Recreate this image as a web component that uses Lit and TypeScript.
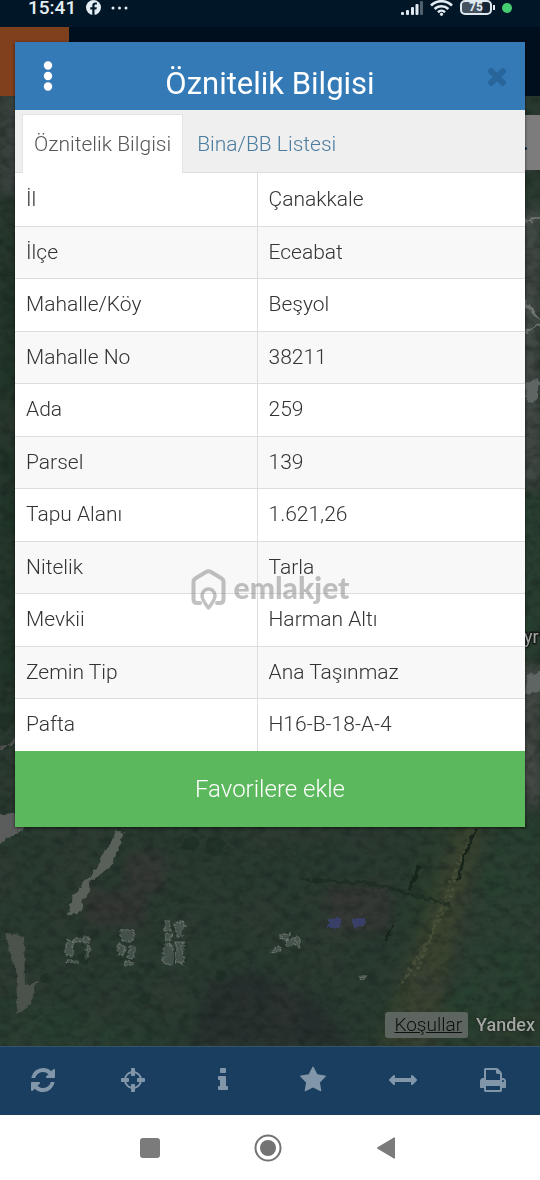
import { LitElement, html, css, svg } from "lit";
import { customElement, property } from "lit/decorators.js";

interface Attribute {
  label: string;
  value: string;
}

const ATTRIBUTES: Attribute[] = [
  { label: "İl", value: "Çanakkale" },
  { label: "İlçe", value: "Eceabat" },
  { label: "Mahalle/Köy", value: "Beşyol" },
  { label: "Mahalle No", value: "38211" },
  { label: "Ada", value: "259" },
  { label: "Parsel", value: "139" },
  { label: "Tapu Alanı", value: "1.621,26" },
  { label: "Nitelik", value: "Tarla" },
  { label: "Mevkii", value: "Harman Altı" },
  { label: "Zemin Tip", value: "Ana Taşınmaz" },
  { label: "Pafta", value: "H16-B-18-A-4" },
];

const GLYPHS = {
  refresh:
    "M1639 1056q0 5-1 7-64 268-268 434.5t-478 166.5q-146 0-282.5-55t-243.5-157l-129 129q-19 19-45 19t-45-19-19-45v-448q0-26 19-45t45-19h448q26 0 45 19t19 45-19 45l-137 137q71 66 161 102t187 36q134 0 250-65t186-179q11-17 53-117 8-23 30-23h192q13 0 22.5 9.5t9.5 22.5zm25-800v448q0 26-19 45t-45 19h-448q-26 0-45-19t-19-45 19-45l138-138q-148-137-349-137-134 0-250 65t-186 179q-11 17-53 117-8 23-30 23h-199q-13 0-22.5-9.5t-9.5-22.5v-7q65-268 270-434.5t480-166.5q146 0 284 55.5t245 156.5l130-129q19-19 45-19t45 19 19 45z",
  locate:
    "M1325 1024h-109q-26 0-45-19t-19-45v-128q0-26 19-45t45-19h109q-32-108-112.5-188.5t-188.5-112.5v109q0 26-19 45t-45 19h-128q-26 0-45-19t-19-45v-109q-108 32-188.5 112.5t-112.5 188.5h109q26 0 45 19t19 45v128q0 26-19 45t-45 19h-109q32 108 112.5 188.5t188.5 112.5v-109q0-26 19-45t45-19h128q26 0 45 19t19 45v109q108-32 188.5-112.5t112.5-188.5zm339-192v128q0 26-19 45t-45 19h-143q-37 161-154.5 278.5t-278.5 154.5v143q0 26-19 45t-45 19h-128q-26 0-45-19t-19-45v-143q-161-37-278.5-154.5t-154.5-278.5h-143q-26 0-45-19t-19-45v-128q0-26 19-45t45-19h143q37-161 154.5-278.5t278.5-154.5v-143q0-26 19-45t45-19h128q26 0 45 19t19 45v143q161 37 278.5 154.5t154.5 278.5h143q26 0 45 19t19 45z",
  info: "M1216 1344v128q0 26-19 45t-45 19h-512q-26 0-45-19t-19-45v-128q0-26 19-45t45-19h64v-384h-64q-26 0-45-19t-19-45v-128q0-26 19-45t45-19h384q26 0 45 19t19 45v576h64q26 0 45 19t19 45zm-128-1152v192q0 26-19 45t-45 19h-256q-26 0-45-19t-19-45v-192q0-26 19-45t45-19h256q26 0 45 19t19 45z",
  star: "M1728 647q0 22-26 48l-363 354 86 500q1 7 1 20 0 21-10.5 35.5t-30.5 14.5q-19 0-40-12l-449-236-449 236q-22 12-40 12-21 0-31.5-14.5t-10.5-35.5q0-6 2-20l86-500-364-354q-25-27-25-48 0-37 56-46l502-73 225-455q19-41 49-41t49 41l225 455 502 73q56 9 56 46z",
  measure:
    "M1792 896q0 26-19 45l-256 256q-19 19-45 19t-45-19-19-45v-128h-1024v128q0 26-19 45t-45 19-45-19l-256-256q-19-19-19-45t19-45l256-256q19-19 45-19t45 19 19 45v128h1024v-128q0-26 19-45t45-19 45 19l256 256q19 19 19 45z",
  print:
    "M448 1536h896v-256h-896v256zm0-640h896v-384h-160q-40 0-68-28t-28-68v-160h-640v640zm1152 64q0-26-19-45t-45-19-45 19-19 45 19 45 45 19 45-19 19-45zm128 0v416q0 13-9.5 22.5t-22.5 9.5h-224v160q0 40-28 68t-68 28h-960q-40 0-68-28t-28-68v-160h-224q-13 0-22.5-9.5t-9.5-22.5v-416q0-79 56.5-135.5t135.5-56.5h64v-544q0-40 28-68t68-28h672q40 0 88 20t76 48l152 152q28 28 48 76t20 88v256h64q79 0 135.5 56.5t56.5 135.5z",
  close:
    "M1490 1322q0 40-28 68l-136 136q-28 28-68 28t-68-28l-294-294-294 294q-28 28-68 28t-68-28l-136-136q-28-28-28-68t28-68l294-294-294-294q-28-28-28-68t28-68l136-136q28-28 68-28t68 28l294 294 294-294q28-28 68-28t68 28l136 136q28 28 28 68t-28 68l-294 294 294 294q28 28 28 68z",
};

type GlyphName = keyof typeof GLYPHS;

const TOOLS: { glyph: GlyphName; label: string }[] = [
  { glyph: "refresh", label: "Yenile" },
  { glyph: "locate", label: "Konum" },
  { glyph: "info", label: "Bilgi" },
  { glyph: "star", label: "Favoriler" },
  { glyph: "measure", label: "Ölç" },
  { glyph: "print", label: "Yazdır" },
];

@customElement("glyph-icon")
export class GlyphIcon extends LitElement {
  static styles = css`
    :host {
      display: block;
      width: 28px;
      height: 28px;
    }
    .glyph {
      display: block;
      width: 100%;
      height: 100%;
      fill: currentColor;
    }
  `;

  @property() name: GlyphName = "info";

  render() {
    return html`<svg class="glyph" viewBox="0 0 1792 1792" aria-hidden="true">
      <path d=${GLYPHS[this.name]} />
    </svg>`;
  }
}

@customElement("status-bar")
export class StatusBar extends LitElement {
  static styles = css`
    :host {
      display: flex;
      align-items: flex-start;
      justify-content: space-between;
      height: 27px;
      padding: 0 28px;
      box-sizing: border-box;
      background: #011728;
      color: #e4edf4;
    }
    .left,
    .right {
      display: flex;
      align-items: center;
      height: 15px;
    }
    .left {
      gap: 10px;
    }
    .time {
      font-size: 19px;
      line-height: 15px;
      font-weight: 500;
    }
    .right {
      gap: 7px;
    }
    svg {
      display: block;
      overflow: visible;
    }
    .battery {
      display: flex;
      align-items: center;
    }
    .level {
      display: block;
      width: 32px;
      height: 15px;
      box-sizing: border-box;
      border: 2px solid #dfe8ee;
      border-radius: 5px;
      background: linear-gradient(90deg, #45525f 70%, #142636 70%);
      font-size: 12px;
      line-height: 11px;
      font-weight: 700;
      text-align: center;
    }
    .tip {
      width: 2px;
      height: 5px;
      margin-left: 1px;
      background: #dfe8ee;
    }
    .dot {
      width: 10px;
      height: 10px;
      border-radius: 50%;
      background: #45cd72;
    }
  `;

  render() {
    return html`
      <div class="left">
        <span class="time">15:41</span>
        <svg width="15" height="15" viewBox="0 0 15 15" aria-hidden="true">
          <circle cx="7.500" cy="7.500" r="7.500" fill="#e4edf4" />
          <path
            d="M6.300 15V9.600H4.300V7.200h2V5.700c0-2 1.200-3.200 3.100-3.200h1.500v2.100H9.700c-.8 0-1.200.4-1.200 1.100v1.500h2.300l-.4 2.400H8.500V15z"
            fill="#011728"
          />
        </svg>
        <svg width="17" height="4" viewBox="0 0 17 4" fill="#e4edf4" aria-hidden="true">
          <circle cx="2" cy="2" r="1.500" />
          <circle cx="8.500" cy="2" r="1.500" />
          <circle cx="15" cy="2" r="1.500" />
        </svg>
      </div>
      <div class="right">
        <svg width="22" height="14" viewBox="0 0 22 14" fill="#dfe8ee" aria-hidden="true">
          <rect x="0" y="11" width="3" height="3" rx="1" />
          <rect x="5" y="9" width="3" height="5" rx="1" />
          <rect x="10" y="6" width="3" height="8" rx="1" />
          <rect x="14.500" y="3" width="3" height="11" rx="1" />
          <rect x="19" y="0" width="3" height="14" rx="1" fill="#51606d" />
        </svg>
        <svg width="23" height="16" viewBox="0 0 23 16" fill="none" stroke="#e4edf4" stroke-width="2.600" aria-hidden="true">
          <path d="M1 5.500a15 15 0 0 1 21 0M4.600 9a10 10 0 0 1 13.800 0M8 12.200a5 5 0 0 1 7 0" />
          <circle cx="11.500" cy="14.300" r="1.200" fill="#e4edf4" stroke-width="1" />
        </svg>
        <div class="battery"><span class="level">75</span><span class="tip"></span></div>
        <span class="dot"></span>
      </div>
    `;
  }
}

@customElement("satellite-map")
export class SatelliteMap extends LitElement {
  static styles = css`
    :host {
      display: grid;
      min-height: 0;
      overflow: hidden;
      background: #2b3a31;
    }
    .terrain {
      grid-area: 1 / 1;
      display: block;
      width: 100%;
      height: 100%;
      min-height: 0;
    }
    .terrain filter {
      color-interpolation-filters: sRGB;
    }
    .credits {
      grid-area: 1 / 1;
      z-index: 1;
      align-self: end;
      justify-self: end;
      display: flex;
      align-items: center;
      gap: 8px;
      padding: 0 5px 8px 0;
    }
    .terms {
      padding: 0 6px 0 9px;
      border-radius: 3px;
      background: #5d6560;
      color: #0c100e;
      font-size: 19px;
      line-height: 26px;
      font-weight: 300;
    }
    .brand {
      color: #a2a7a3;
      font-size: 18px;
      line-height: 26px;
      font-weight: 500;
      text-shadow: 0 0 2px #111;
    }
    .chip {
      grid-area: 1 / 1;
      z-index: 1;
      justify-self: end;
      width: 130px;
      height: 55px;
      margin-top: 19px;
      background: #7b7c7b;
      color: #080808;
      font-size: 26px;
      line-height: 52px;
      text-indent: 112px;
    }
    .place {
      fill: #a3a7a4;
      stroke: #161b18;
      stroke-width: 3px;
      paint-order: stroke;
      font-size: 18px;
    }
  `;

  private ruins() {
    const spots = [
      [66, 845, 7, 14], [72, 843, 8, 4], [82, 842, 7, 5], [66, 863, 12, 5], [86, 850, 3, 10],
      [121, 834, 13, 11], [118, 850, 6, 10], [128, 850, 6, 13], [123, 866, 10, 4],
      [164, 825, 7, 10], [176, 825, 7, 16], [165, 838, 6, 7], [164, 848, 8, 20], [176, 846, 7, 22],
      [282, 837, 6, 6], [286, 843, 9, 7], [273, 852, 7, 4], [296, 842, 4, 10], [360, 879, 4, 4],
    ];
    return spots.map(
      ([x, y, w, h]) =>
        svg`<rect x=${x} y=${y} width=${w} height=${h} fill="#7c8480" fill-opacity=".35" stroke="#8d938e" stroke-opacity=".6" stroke-dasharray="4 1" />`
    );
  }

  render() {
    return html`
      <svg class="terrain" viewBox="0 0 540 950" preserveAspectRatio="xMidYMid slice" aria-hidden="true">
        <defs>
          <filter id="grain" x="0" y="0" width="100%" height="100%">
            <feTurbulence type="fractalNoise" baseFrequency=".09 .12" numOctaves="5" seed="21" />
            <feColorMatrix values="0 0 0 0 .07  0 0 0 0 .1  0 0 0 0 .09  2 .8 0 0 -1.200" />
          </filter>
          <filter id="patches" x="0" y="0" width="100%" height="100%">
            <feTurbulence type="fractalNoise" baseFrequency=".02" numOctaves="5" seed="3" />
            <feColorMatrix values="0 0 0 0 .22  0 0 0 0 .24  0 0 0 0 .22  2 0 0 0 -.8" />
          </filter>
          <filter id="rough" x="-20%" y="-20%" width="140%" height="140%">
            <feTurbulence type="fractalNoise" baseFrequency=".12" numOctaves="3" seed="5" />
            <feDisplacementMap in="SourceGraphic" scale="8" xChannelSelector="R" yChannelSelector="G" />
            <feGaussianBlur stdDeviation=".7" />
          </filter>
          <filter id="soft"><feGaussianBlur stdDeviation="6" /></filter>
        </defs>
        <rect width="540" height="950" fill="#293a30" />
        <g filter="url(#soft)">
          <path d="M0 0H30V85L0 110z" fill="#3d4441" />
          <path d="M0 100H30V630H0z" fill="#203428" />
          <path d="M520 110H540V390H520z" fill="#454d49" />
          <path d="M515 400H540V560H515z" fill="#28402f" />
          <path d="M518 570H540V710H518z" fill="#474b47" />
          <path d="M430 720H540V950H370L400 860L410 780z" fill="#2b3d2d" />
          <path d="M462 720L486 720L430 950H380z" fill="#39442f" />
          <path d="M500 720H540V900L470 950H440z" fill="#28402f" />
          <path d="M210 885L255 875L320 905L350 950H190z" fill="#262f2d" />
          <path d="M0 900Q90 910 180 950H0z" fill="#283f30" />
          <path d="M125 760L160 755 165 795 130 800zM85 795h60v35H85zM325 790h65v45h-60z" fill="#333632" />
        </g>
        <rect width="540" height="950" filter="url(#patches)" opacity=".5" />
        <rect width="540" height="950" filter="url(#grain)" opacity=".4" />
        <g filter="url(#rough)">
          <path d="M0 650L30 645V630L0 655z" fill="#4f5251" />
          <path d="M-6 720Q25 716 50 715L20 735L-6 750z" fill="#5a5d5c" />
          <path d="M117 734L124 735L112 768L92 784L78 818H67L72 800L97 772z" fill="#596059" />
          <path d="M4 838L24 840L25 890L38 885L30 908L16 918L18 885L9 850z" fill="#4a524b" />
          <path d="M475 735L460 762L415 880M470 745L445 815L400 890" fill="none" stroke="#4d543c" stroke-width="3" stroke-dasharray="4 3" opacity=".7" />
          <path d="M476 733L462 765L458 785" fill="none" stroke="#17251b" stroke-width="3" />
          <path d="M420 768L410 795" fill="none" stroke="#17251b" stroke-width="4" />
          <path d="M392 830L386 845" fill="none" stroke="#17251b" stroke-width="3" />
          <path d="M300 784Q370 785 400 795T450 808" fill="none" stroke="#1a291f" stroke-width="3" opacity=".7" />
          <path d="M510 130L550 118M510 190L550 235M510 240L550 226" fill="none" stroke="#6f7570" stroke-width="2" />
          <path d="M524 290l14-7v18l-10 7zM528 580l22-10v24l-25 5z" fill="#5f6562" />
          <path d="M328 822h13v9h-13zM353 822h12v9h-12z" fill="#3e4580" opacity=".7" />
          ${this.ruins()}
        </g>
        <g fill="#192a20" opacity=".5" filter="url(#rough)">
          <circle cx="44" cy="883" r="4" /><circle cx="84" cy="862" r="6" />
          <circle cx="220" cy="880" r="6" /><circle cx="190" cy="748" r="8" />
          <circle cx="215" cy="750" r="10" /><circle cx="145" cy="903" r="6" />
          <circle cx="5" cy="625" r="9" />
        </g>
        <text class="place" x="524" y="547">yr</text>
      </svg>
      <div class="chip">.</div>
      <div class="credits">
        <a class="terms" href="#kosullar">Koşullar</a>
        <span class="brand">Yandex</span>
      </div>
    `;
  }
}

@customElement("attribute-dialog")
export class AttributeDialog extends LitElement {
  static styles = css`
    :host {
      display: block;
      background: #fff;
      color: #333;
      box-shadow: 0 1px 3px rgba(0, 0, 0, 0.6);
      font-weight: 300;
    }
    button {
      margin: 0;
      padding: 0;
      border: 0;
      background: none;
      color: inherit;
      font: inherit;
    }
    .header {
      display: grid;
      grid-template-columns: 66px 1fr 66px;
      align-items: center;
      height: 68px;
      background: #337ab7;
      color: #fff;
    }
    .header > button {
      display: grid;
      place-items: center;
      height: 68px;
    }
    .header > .close {
      padding-left: 10px;
      color: #28659b;
    }
    .title {
      margin: 0;
      padding-top: 16px;
      font-size: 31px;
      line-height: 36px;
      font-weight: 400;
      text-align: center;
    }
    .tabs {
      display: flex;
      align-items: flex-end;
      height: 63px;
      padding-left: 7px;
      box-sizing: border-box;
      border-bottom: 1px solid #ddd;
      background: #efefef;
    }
    .tab {
      height: 58px;
      padding: 0 11px;
      margin-right: 2px;
      border: 1px solid transparent;
      border-bottom: 0;
      color: #4b7c9f;
      font-size: 21px;
      line-height: 24px;
    }
    .tab[aria-selected="true"] {
      margin-bottom: -1px;
      padding-bottom: 1px;
      height: 59px;
      border-color: #e3e3e3;
      background: #fff;
      color: #555;
    }
    .body {
      display: grid;
    }
    .attributes {
      grid-area: 1 / 1;
      width: 100%;
      border-collapse: collapse;
      table-layout: fixed;
      font-size: 21px;
      line-height: 24px;
    }
    .row {
      height: 53px;
    }
    .row:nth-child(even) {
      height: 52px;
      background: #f8f8f8;
    }
    .cell {
      padding: 0 11px 1px;
      border-bottom: 1px solid #ddd;
      font-weight: 300;
      text-align: left;
    }
    .row:last-child .cell {
      border-bottom: 0;
    }
    .name {
      width: 242px;
      box-sizing: border-box;
      border-right: 1px solid #ddd;
    }
    .watermark {
      grid-area: 1 / 1;
      z-index: 1;
      align-self: end;
      justify-self: center;
      display: flex;
      align-items: center;
      gap: 8px;
      padding-bottom: 140px;
      color: #777;
      opacity: 0.45;
      pointer-events: none;
    }
    .wordmark {
      padding-bottom: 6px;
      font-family: Lato, sans-serif;
      font-size: 30px;
      line-height: 36px;
      font-weight: 900;
    }
    .favorite {
      display: block;
      width: 100%;
      height: 76px;
      background: #5cb85c;
      color: #fff;
      font-size: 24px;
      line-height: 28px;
    }
  `;

  @property({ attribute: false }) rows: Attribute[] = [];

  render() {
    return html`
      <header class="header">
        <button type="button" aria-label="Menü">
          <svg width="10" height="30" viewBox="0 0 10 30" fill="#fff" aria-hidden="true">
            <circle cx="5" cy="4.500" r="4.200" />
            <circle cx="5" cy="15" r="4.200" />
            <circle cx="5" cy="25.500" r="4.200" />
          </svg>
        </button>
        <h1 class="title">Öznitelik Bilgisi</h1>
        <button class="close" type="button" aria-label="Kapat">
          <glyph-icon name="close"></glyph-icon>
        </button>
      </header>
      <div class="tabs" role="tablist">
        <button class="tab" type="button" role="tab" aria-selected="true">Öznitelik Bilgisi</button>
        <button class="tab" type="button" role="tab" aria-selected="false">Bina/BB Listesi</button>
      </div>
      <div class="body">
        <table class="attributes">
          <tbody>
            ${this.rows.map(
              (row) => html`<tr class="row">
                <th class="cell name" scope="row">${row.label}</th>
                <td class="cell">${row.value}</td>
              </tr>`
            )}
          </tbody>
        </table>
        <div class="watermark">
          <svg width="35" height="42" viewBox="0 0 35 42" fill="none" stroke="currentColor" aria-hidden="true">
            <path
              d="M9 34H6Q2.500 34 2.500 30V13Q2.500 10.500 5 9L15 3Q17.500 1.500 20 3L30 9Q32.500 10.500 32.500 13V30Q32.500 34 29 34H26"
              stroke-width="4"
              stroke-linecap="round"
            />
            <path d="M17.500 39Q11 31 11 26.500A6.500 6.500 0 0 1 24 26.500Q24 31 17.500 39z" stroke-width="3.500" stroke-linejoin="round" />
          </svg>
          <span class="wordmark">emlakjet</span>
        </div>
      </div>
      <button class="favorite" type="button">Favorilere ekle</button>
    `;
  }
}

@customElement("app-root")
export class AppRoot extends LitElement {
  static styles = css`
    :host {
      position: relative;
      display: grid;
      grid-template-rows: auto auto minmax(0, 1fr) auto auto;
      height: 100vh;
      min-height: 1000px;
      overflow: hidden;
      font-family: Roboto, "Noto Sans", sans-serif;
    }
    .appbar {
      height: 69px;
      background: #000f1d;
    }
    .badge {
      width: 69px;
      height: 69px;
      background: #803f1d;
    }
    .dialog {
      position: absolute;
      top: 42px;
      left: 15px;
      right: 15px;
      z-index: 2;
    }
    .toolbar {
      display: grid;
      grid-template-columns: repeat(6, 1fr);
      height: 69px;
      box-sizing: border-box;
      border-top: 1px solid #35546a;
      background: #193e5f;
    }
    .toolbar button,
    .system button {
      display: grid;
      place-items: center;
      margin: 0;
      border: 0;
      background: none;
    }
    .toolbar button {
      padding: 0 4px 2px 0;
      color: #8296a9;
    }
    .system {
      display: flex;
      justify-content: center;
      gap: 58px;
      height: 65px;
      padding-right: 5px;
      background: #fff;
    }
    .system button {
      width: 60px;
      padding: 0;
    }
  `;

  render() {
    return html`
      <status-bar></status-bar>
      <div class="appbar"><div class="badge"></div></div>
      <satellite-map></satellite-map>
      <nav class="toolbar">
        ${TOOLS.map(
          (tool) => html`<button type="button" aria-label=${tool.label}>
            <glyph-icon name=${tool.glyph}></glyph-icon>
          </button>`
        )}
      </nav>
      <nav class="system">
        <button type="button" aria-label="Son uygulamalar">
          <svg width="28" height="28" viewBox="0 0 28 28" aria-hidden="true">
            <rect x="4" y="4" width="20" height="20" rx="3" fill="#7b7b7b" />
          </svg>
        </button>
        <button type="button" aria-label="Ana ekran">
          <svg width="28" height="28" viewBox="0 0 28 28" aria-hidden="true">
            <circle cx="14" cy="14" r="12.500" fill="none" stroke="#737373" stroke-width="2" />
            <circle cx="14" cy="14" r="8" fill="#737373" />
          </svg>
        </button>
        <button type="button" aria-label="Geri">
          <svg width="28" height="28" viewBox="0 0 28 28" aria-hidden="true">
            <path d="M22 3.500Q23 3 23 4V24Q23 25 22 24.500L5.500 14.800Q4.500 14 5.500 13.200z" fill="#7b7b7b" />
          </svg>
        </button>
      </nav>
      <attribute-dialog class="dialog" role="dialog" aria-label="Öznitelik Bilgisi" .rows=${ATTRIBUTES}></attribute-dialog>
    `;
  }
}
